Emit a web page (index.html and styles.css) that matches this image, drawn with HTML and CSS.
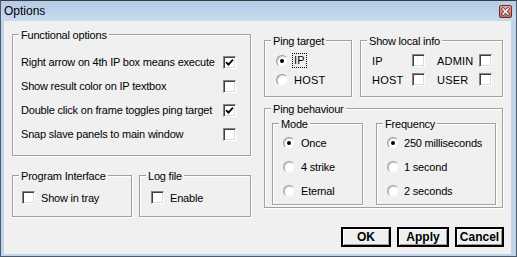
FILE: index.html
```html
<!DOCTYPE html>
<html>
<head>
<meta charset="utf-8">
<link rel="stylesheet" href="styles.css">
</head>
<body>
<div class="window">
  <div class="titlebar">
    <span class="title">Options</span>
    <svg class="close" width="13" height="13" viewBox="0 0 13 13">
      <defs>
        <linearGradient id="cg" x1="0" y1="0" x2="0" y2="1">
          <stop offset="0" stop-color="#e9aaa3"/>
          <stop offset="1" stop-color="#c9645a"/>
        </linearGradient>
      </defs>
      <rect x="0.5" y="0.5" width="12" height="12" rx="1.5" fill="url(#cg)" stroke="#6e2b2b"/>
      <path d="M4 4 L9 9 M9 4 L4 9" stroke="#5a2020" stroke-width="3" stroke-linecap="square"/>
      <path d="M4 4 L9 9 M9 4 L4 9" stroke="#fff" stroke-width="1.6" stroke-linecap="square"/>
    </svg>
  </div>
  <div class="client">
    <div class="col-left">
      <div class="group func">
        <div class="legend">Functional options</div>
        <div class="rows">
          <div class="row"><span>Right arrow on 4th IP box means execute</span><span class="cb"><svg width="9" height="9" viewBox="0 0 9 9"><polyline points="1,4.2 3.4,6.6 8,1.6" fill="none" stroke="#000" stroke-width="1.9"/></svg></span></div>
          <div class="row"><span>Show result color on IP textbox</span><span class="cb"></span></div>
          <div class="row"><span>Double click on frame toggles ping target</span><span class="cb"><svg width="9" height="9" viewBox="0 0 9 9"><polyline points="1,4.2 3.4,6.6 8,1.6" fill="none" stroke="#000" stroke-width="1.9"/></svg></span></div>
          <div class="row"><span>Snap slave panels to main window</span><span class="cb"></span></div>
        </div>
      </div>
      <div class="lower">
        <div class="group prog">
          <div class="legend">Program Interface</div>
          <div class="check-row"><span class="cb"></span><span>Show in tray</span></div>
        </div>
        <div class="group log">
          <div class="legend">Log file</div>
          <div class="check-row"><span class="cb"></span><span>Enable</span></div>
        </div>
      </div>
    </div>
    <div class="col-right">
      <div class="top">
        <div class="group target">
          <div class="legend">Ping target</div>
          <div class="list">
            <div class="radio-row"><span class="radio on"><span class="dot"></span></span><span class="focus">IP</span></div>
            <div class="radio-row"><span class="radio"></span><span class="lbl">HOST</span></div>
          </div>
        </div>
        <div class="group local">
          <div class="legend">Show local info</div>
          <div class="grid">
            <span>IP</span><span class="cb"></span>
            <span>ADMIN</span><span class="cb"></span>
            <span>HOST</span><span class="cb"></span>
            <span>USER</span><span class="cb"></span>
          </div>
        </div>
      </div>
      <div class="group behav">
        <div class="legend">Ping behaviour</div>
        <div class="inner">
          <div class="group mode">
            <div class="legend">Mode</div>
            <div class="list">
              <div class="opt"><span class="radio on"><span class="dot"></span></span><span>Once</span></div>
              <div class="opt"><span class="radio"></span><span>4 strike</span></div>
              <div class="opt"><span class="radio"></span><span>Eternal</span></div>
            </div>
          </div>
          <div class="group freq">
            <div class="legend">Frequency</div>
            <div class="list">
              <div class="opt"><span class="radio on"><span class="dot"></span></span><span>250 milliseconds</span></div>
              <div class="opt"><span class="radio"></span><span>1 second</span></div>
              <div class="opt"><span class="radio"></span><span>2 seconds</span></div>
            </div>
          </div>
        </div>
      </div>
      <div class="buttons">
        <button class="btn ok">OK</button>
        <button class="btn apply">Apply</button>
        <button class="btn cancel">Cancel</button>
      </div>
    </div>
  </div>
</div>
</body>
</html>
```

FILE: styles.css
```css
* { box-sizing: border-box; }
body {
  margin: 0;
  font-family: "Liberation Sans", Arial, sans-serif;
  font-size: 11px;
  letter-spacing: -0.2px;
  color: #000;
}
.window {
  width: 517px;
  height: 257px;
  border: 1px solid #4d5a6a;
  border-top-color: #3c3c3c;
  background: #bfd4ec;
  display: flex;
  flex-direction: column;
}
.titlebar {
  height: 20px;
  flex: none;
  display: flex;
  align-items: center;
  justify-content: space-between;
  padding: 0 4px 0 3px;
  background: linear-gradient(#b4cbe6, #c8daef);
}
.title { font-size: 12px; letter-spacing: 0; }
.close { display: block; }
.client {
  flex: 1;
  margin: 0 5px 2px 3px;
  background: #f0f0f0;
  display: flex;
  gap: 13px;
  padding: 0 8px;
}
.col-left { width: 239px; padding-top: 13px; display: flex; flex-direction: column; }
.col-right { width: 239px; padding-top: 19px; display: flex; flex-direction: column; }

.group {
  border: 1px solid #a0a0a0;
  box-shadow: inset 1px 1px #fff, 1px 1px #fff;
}
.legend {
  width: fit-content;
  height: 13px;
  line-height: 13px;
  margin: -6px 0 0 6px;
  padding: 0 2px;
  background: #f0f0f0;
  white-space: nowrap;
}

.cb {
  width: 13px;
  height: 13px;
  flex: none;
  background: #fff;
  border: 1px solid;
  border-color: #858585 #fff #fff #858585;
  box-shadow: inset 1px 1px #404040, inset -1px -1px #dcdcdc;
  display: flex;
  align-items: center;
  justify-content: center;
}
.cb svg { display: block; }

.radio {
  width: 12px;
  height: 12px;
  flex: none;
  border-radius: 50%;
  background: #fff;
  border: 1px solid;
  border-color: #9a9a9a #f2f2f2 #f2f2f2 #9a9a9a;
  box-shadow: inset 1px 1px #d0d0d0;
  display: flex;
  align-items: center;
  justify-content: center;
}
.dot { width: 4px; height: 4px; border-radius: 50%; background: #000; }

/* Functional options */
.func { height: 122px; }
.func .rows { margin-top: 8px; padding: 0 14px 0 8px; }
.row { height: 24px; display: flex; align-items: center; justify-content: space-between; }

.lower { display: flex; gap: 7px; margin-top: 19px; }
.prog { width: 120px; height: 42px; }
.log { width: 112px; height: 42px; }
.check-row { display: flex; align-items: center; gap: 6px; height: 13px; margin-top: 8px; padding-left: 9px; }
.log .check-row { padding-left: 11px; }

/* Right column */
.top { display: flex; gap: 8px; }
.target { width: 88px; height: 57px; }
.local { width: 143px; height: 57px; }
.target .list { margin-top: 3px; padding-left: 11px; }
.radio-row { height: 19px; display: flex; align-items: center; gap: 4px; letter-spacing: 0.2px; }
.focus { border: 1px dotted #000; padding: 0 1px; line-height: 13px; }
.lbl { padding-left: 2px; }
.local .grid {
  margin-top: 3px;
  padding-left: 11px;
  display: grid;
  grid-template-columns: 40px 25px 42px 13px;
  grid-auto-rows: 19px;
  align-items: center;
  letter-spacing: 0.2px;
}

.behav { height: 100px; margin-top: 11px; }
.behav .inner { display: flex; gap: 13px; margin-top: 7px; padding-left: 7px; }
.mode { width: 91px; height: 82px; }
.freq { width: 120px; height: 82px; }
.mode .list, .freq .list { padding-left: 10px; }
.opt { height: 24px; display: flex; align-items: center; gap: 6px; }
.freq .opt { gap: 5px; }

.buttons { display: flex; justify-content: flex-end; gap: 6px; margin-top: 19px; margin-right: -1px; }
.btn {
  height: 20px;
  padding: 0;
  border: 2px solid #000;
  background: #f0f0f0;
  box-shadow: inset 1px 1px #fff, inset -1px -1px #a0a0a0;
  font-family: "Liberation Sans", Arial, sans-serif;
  font-weight: bold;
  font-size: 12px;
  letter-spacing: 0;
  color: #000;
  display: flex;
  align-items: center;
  justify-content: center;
}
.ok { width: 50px; }
.apply { width: 52px; }
.cancel { width: 49px; }
```
